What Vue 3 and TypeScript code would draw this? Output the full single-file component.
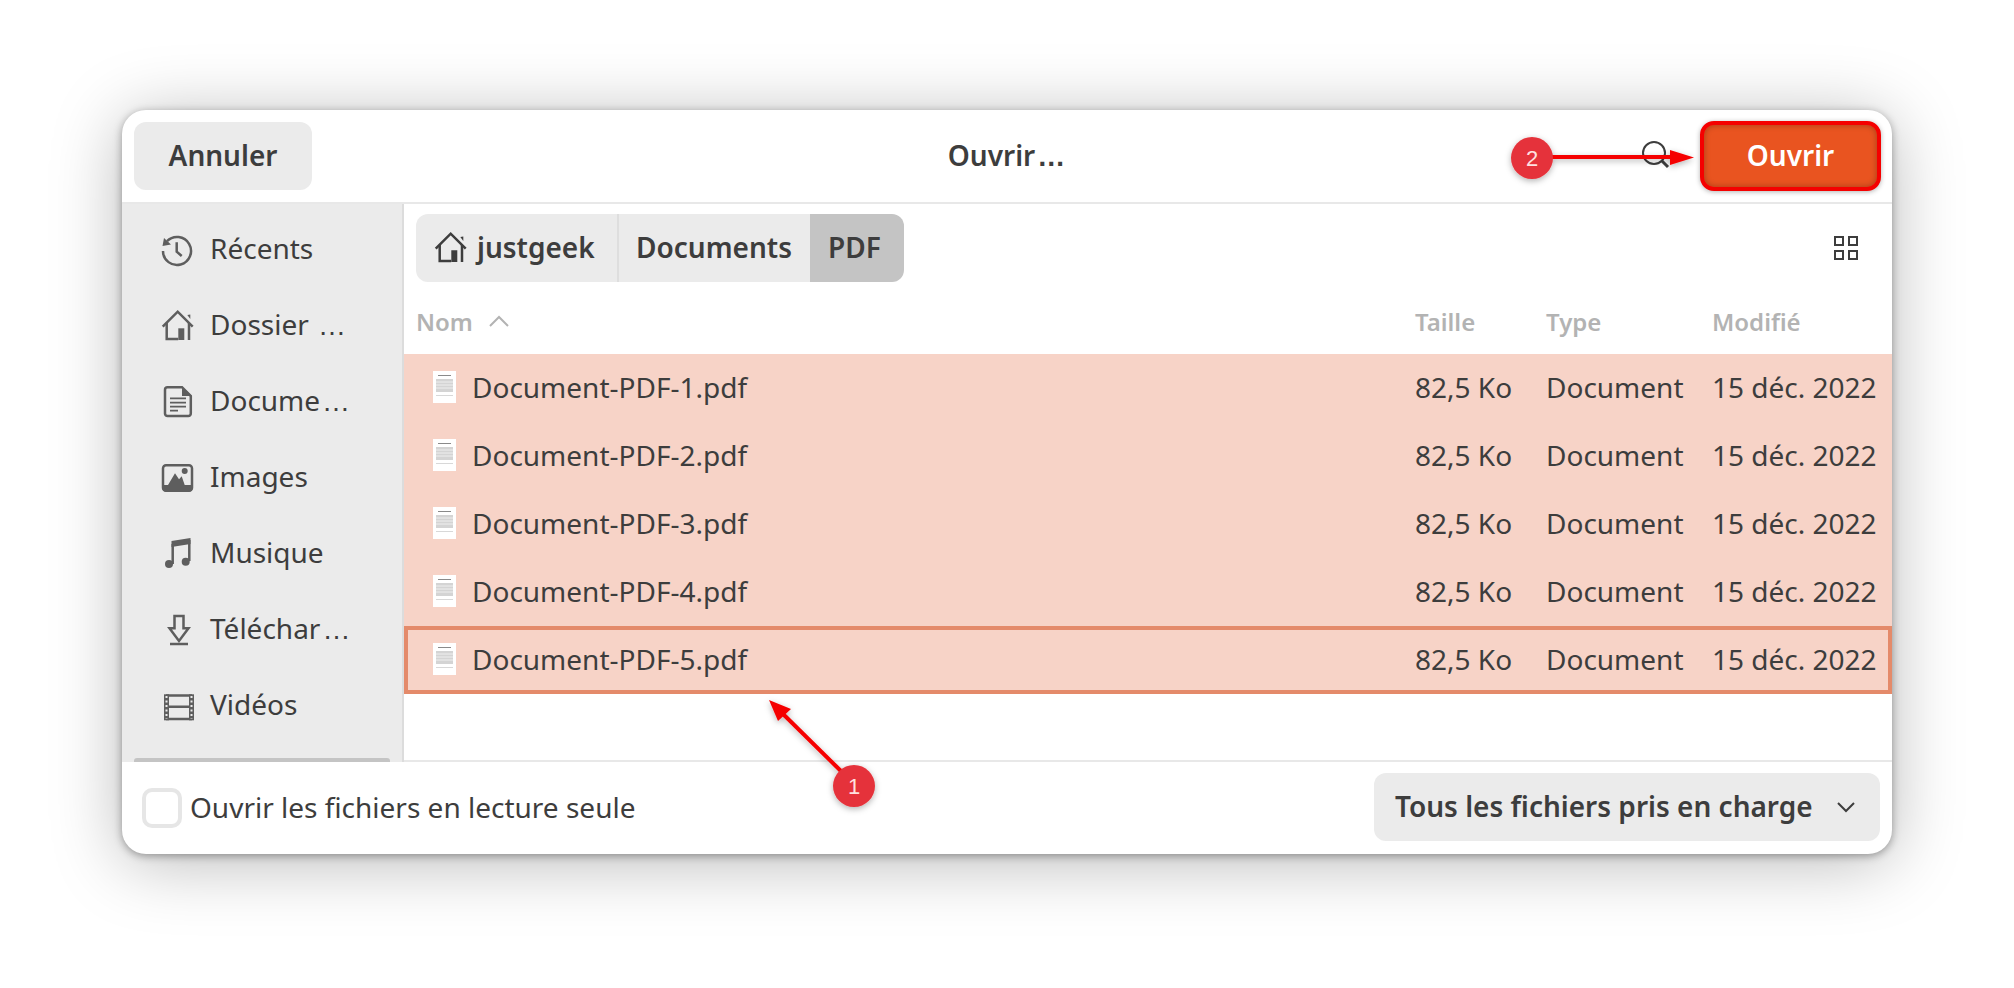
<script setup lang="ts">
const places = [
  { label: 'Récents', dots: false, icon: 'recent' },
  { label: 'Dossier ', dots: true, icon: 'home' },
  { label: 'Docume', dots: true, icon: 'doc' },
  { label: 'Images', dots: false, icon: 'image' },
  { label: 'Musique', dots: false, icon: 'music' },
  { label: 'Téléchar', dots: true, icon: 'download' },
  { label: 'Vidéos', dots: false, icon: 'film' },
]
const files = [1, 2, 3, 4, 5].map((n) => ({
  id: n,
  name: `Document-PDF-${n}.pdf`,
  size: '82,5 Ko',
  type: 'Document',
  date: '15 déc. 2022',
}))
</script>

<template>
  <div class="page">
    <div class="dialog">
      <header class="head">
        <button class="btn cancel">Annuler</button>
        <div class="title">Ouvrir<span class="dots">…</span></div>
        <svg class="search" width="30" height="30" viewBox="0 0 30 30" fill="none" stroke="#3d3d3d">
          <circle cx="13" cy="12" r="11" stroke-width="2" />
          <path d="M21 20l6 6" stroke-width="3" />
        </svg>
        <button class="btn open">Ouvrir</button>
      </header>

      <div class="body">
        <aside class="side">
          <div v-for="p in places" :key="p.icon" class="place">
            <svg class="place-icon" width="32" height="32" viewBox="0 0 32 32" fill="none" stroke="#5e5e5e" stroke-width="2.500">
              <template v-if="p.icon === 'recent'">
                <path d="M6 8.200A14 14 0 1 1 2 18" />
                <path d="M1.500 13L3 5l7 6.500z" fill="#5e5e5e" stroke="none" />
                <path d="M15.700 9.300v9.400l5 4.300" />
              </template>
              <template v-else-if="p.icon === 'home'">
                <path d="M1.700 17.700L16.700 2.700l15 15" />
                <path d="M5.700 14v16h11.500M28 14v17" />
                <path d="M17.300 19.300h6V31h-6z" fill="#5e5e5e" stroke="none" />
                <path d="M26.300 6l3-0.500V10z" fill="#5e5e5e" stroke="none" />
              </template>
              <template v-else-if="p.icon === 'doc'">
                <path d="M6.500 2.200H21L29.800 11v17.500a2.500 2.500 0 0 1-2.500 2.500H6.500A2.500 2.500 0 0 1 4 28.500V4.700a2.500 2.500 0 0 1 2.500-2.500z" />
                <path d="M21 1.500L30.500 11H21z" fill="#5e5e5e" stroke="none" />
                <path d="M9 13.300h16M9 17.700h16M9 21.700h16M9 25.700h8" stroke-width="1.800" />
              </template>
              <template v-else-if="p.icon === 'image'">
                <rect x="2" y="4.200" width="29" height="25.500" rx="3" />
                <path d="M2 24h29v4a2.500 2.500 0 0 1-2.500 2.500h-24A2.500 2.500 0 0 1 2 28z" fill="#5e5e5e" stroke="none" />
                <path d="M7 24L14 12.300l4 6 2.700-3 3 8.700z" fill="#5e5e5e" stroke="none" />
                <circle cx="23.700" cy="10" r="3" fill="#5e5e5e" stroke="none" />
              </template>
              <template v-else-if="p.icon === 'music'">
                <path d="M11.700 27V7M28.300 24V3" />
                <path d="M10.500 4L29.500 1v6l-19 3z" fill="#5e5e5e" stroke="none" />
                <circle cx="8" cy="27" r="4" fill="#5e5e5e" stroke="none" />
                <circle cx="24.700" cy="24.700" r="4" fill="#5e5e5e" stroke="none" />
              </template>
              <template v-else-if="p.icon === 'download'">
                <path d="M13.500 3h9v12.300h5L18 28 8.500 15.300h5z" />
                <path d="M9 31h18" />
              </template>
              <template v-else>
                <path d="M5 6.500h26M5 17.700h26M5 30h26" />
                <rect x="3" y="5.300" width="5" height="26" fill="#5e5e5e" stroke="none" />
                <rect x="28" y="5.300" width="5" height="26" fill="#5e5e5e" stroke="none" />
                <path d="M5.500 7v23M30.500 7v23" stroke="#ebebeb" stroke-width="2" stroke-dasharray="2 2.500" />
              </template>
            </svg>
            <span class="place-label">{{ p.label }}<span v-if="p.dots" class="dots">…</span></span>
          </div>
          <div class="side-scroll"></div>
        </aside>

        <main class="main">
          <div class="pathrow">
            <div class="path">
              <div class="seg seg-home">
                <svg width="34" height="32" viewBox="0 0 34 32" fill="none" stroke="#3d3d3d" stroke-width="2.500">
                  <path d="M1.700 17.700L16.700 2.700l15 15" />
                  <path d="M5.700 14v16h11.500M28 14v17" />
                  <path d="M17.300 19.300h6V31h-6z" fill="#3d3d3d" stroke="none" />
                  <path d="M26.300 6l3-0.500V10z" fill="#3d3d3d" stroke="none" />
                </svg>
                <span>justgeek</span>
              </div>
              <div class="seg seg-docs">Documents</div>
              <div class="seg seg-pdf">PDF</div>
            </div>
            <svg class="grid-icon" width="24" height="24" viewBox="0 0 24 24" fill="none" stroke="#3d3d3d" stroke-width="2">
              <rect x="1" y="1" width="8" height="8" />
              <rect x="15" y="1" width="8" height="8" />
              <rect x="1" y="15" width="8" height="8" />
              <rect x="15" y="15" width="8" height="8" />
            </svg>
          </div>

          <div class="cols">
            <div class="col-name">
              <span>Nom</span>
              <svg width="20" height="12" viewBox="0 0 20 12" fill="none" stroke="#b3b3b3" stroke-width="2"><path d="M1 11l9-9 9 9" /></svg>
            </div>
            <div>Taille</div>
            <div>Type</div>
            <div>Modifié</div>
          </div>

          <div class="list">
            <div v-for="f in files" :key="f.id" class="row" :class="{ focus: f.id === 5 }">
              <div class="cell-name">
                <svg class="file-icon" width="23" height="32" viewBox="0 0 23 32">
                  <rect width="23" height="32" fill="#fff" />
                  <rect x="5" y="4" width="13" height="1" fill="#8a8a8a" />
                  <rect x="3" y="8" width="17" height="13" fill="#d4d4d4" />
                  <path d="M3 11h17M3 14h17M3 17h17" stroke="#efefef" stroke-width="1" />
                  <rect x="3" y="24" width="17" height="1" fill="#d8d8d8" />
                </svg>
                <span>{{ f.name }}</span>
              </div>
              <div>{{ f.size }}</div>
              <div>{{ f.type }}</div>
              <div>{{ f.date }}</div>
            </div>
          </div>
        </main>
      </div>

      <footer class="foot">
        <label class="check">
          <span class="box"></span>
          <span class="lift">Ouvrir les fichiers en lecture seule</span>
        </label>
        <button class="btn filter">
          <span class="lift">Tous les fichiers pris en charge</span>
          <svg width="20" height="12" viewBox="0 0 20 12" fill="none" stroke="#3d3d3d" stroke-width="2"><path d="M2 2l8 8 8-8" /></svg>
        </button>
      </footer>
    </div>

    <svg class="marks" width="2014" height="988" viewBox="0 0 2014 988">
      <defs>
        <filter id="sh" x="-30%" y="-30%" width="160%" height="160%">
          <feDropShadow dx="0" dy="2" stdDeviation="3" flood-color="#000" flood-opacity="0.3" />
        </filter>
      </defs>
      <g filter="url(#sh)">
        <path d="M1550 157H1672" stroke="#f50000" stroke-width="4" fill="none" />
        <path d="M1670 150L1694 157.500L1670 165z" fill="#f50000" />
        <circle cx="1532" cy="158" r="21" fill="#e5323a" />
      </g>
      <g filter="url(#sh)">
        <path d="M846 776L781 712" stroke="#f50000" stroke-width="4" fill="none" />
        <path d="M769 700L791 709L778 721z" fill="#f50000" />
        <circle cx="854" cy="786" r="21" fill="#e5323a" />
      </g>
      <text x="1532" y="166" class="num">2</text>
      <text x="854" y="794" class="num">1</text>
    </svg>
  </div>
</template>

<style>
html, body { margin: 0; background: #fff; }
</style>

<style scoped>
.page {
  position: relative;
  width: 2014px;
  height: 988px;
  box-sizing: border-box;
  padding: 110px 122px 134px;
  background: #fff;
  overflow: hidden;
  font-family: "Noto Sans", "Open Sans", sans-serif;
  font-size: 28px;
  color: #3d3d3d;
}
.dots { font-family: "Liberation Sans", sans-serif; letter-spacing: 1px; margin-left: 2px; }
.dialog {
  height: 744px;
  display: flex;
  flex-direction: column;
  background: #fff;
  border-radius: 24px;
  overflow: hidden;
  box-shadow: 0 2px 8px rgba(0, 0, 0, 0.35), 0 8px 70px rgba(0, 0, 0, 0.28);
}
.btn {
  border: 0;
  font: inherit;
  font-weight: 600;
  color: #3d3d3d;
  border-radius: 12px;
  background: #ebebeb;
  padding: 0;
}
.head {
  height: 94px;
  flex: none;
  display: flex;
  align-items: center;
  padding: 0 11px 0 12px;
  box-sizing: border-box;
  position: relative;
  border-bottom: 2px solid #e8e8e8;
}
.cancel { width: 178px; height: 68px; padding-bottom: 2px; }
.title {
  position: absolute;
  left: 0;
  right: 0;
  text-align: center;
  font-weight: 600;
  pointer-events: none;
  padding-bottom: 2px;
}
.search { margin-left: auto; margin-right: 29px; }
.open {
  width: 181px;
  height: 70px;
  box-sizing: border-box;
  background: #e95420;
  color: #fff;
  border: 4px solid #f50000;
  border-radius: 14px;
  padding-bottom: 2px;
  box-shadow: 0 1px 5px rgba(0, 0, 0, 0.3), inset 0 0 6px rgba(0, 0, 0, 0.3);
}
.body { flex: 1; display: flex; min-height: 0; }
.side {
  width: 282px;
  flex: none;
  box-sizing: border-box;
  background: #ebebeb;
  border-right: 2px solid #dcdcdc;
  padding-top: 7px;
  position: relative;
  overflow: hidden;
}
.place {
  height: 76px;
  display: flex;
  align-items: center;
  padding-left: 39px;
  gap: 17px;
}
.place-icon { flex: none; overflow: visible; }
.place-label { padding-bottom: 2px; white-space: pre; }
.side-scroll {
  position: absolute;
  left: 12px;
  right: 12px;
  bottom: 0;
  height: 4px;
  background: #c4c4c4;
  border-radius: 3px 3px 0 0;
}
.main {
  flex: 1;
  min-width: 0;
  display: flex;
  flex-direction: column;
  border-bottom: 2px solid #e8e8e8;
}
.pathrow {
  height: 78px;
  flex: none;
  display: flex;
  align-items: center;
  justify-content: space-between;
  padding: 10px 34px 0 12px;
  box-sizing: border-box;
}
.path { display: flex; height: 68px; font-weight: 600; }
.seg {
  display: flex;
  align-items: center;
  background: #ebebeb;
  box-sizing: border-box;
  padding-bottom: 2px;
}
.seg-home {
  width: 203px;
  padding-left: 18px;
  gap: 9px;
  border-radius: 12px 0 0 12px;
  border-right: 2px solid #dedede;
}
.seg-docs {
  width: 191px;
  padding-left: 17px;
}
.seg-pdf {
  width: 94px;
  padding-left: 18px;
  background: #c4c4c4;
  border-radius: 0 12px 12px 0;
}
.cols, .row {
  display: grid;
  grid-template-columns: 1011px 131px 166px 1fr;
  align-items: center;
}
.cols {
  height: 72px;
  flex: none;
  font-size: 24px;
  font-weight: 600;
  color: #b3b3b3;
  padding-top: 6px;
  box-sizing: border-box;
}
.col-name {
  display: flex;
  align-items: center;
  gap: 16px;
  padding-left: 12px;
}
.list { flex: 1; }
.row {
  height: 68px;
  background: #f7d3c7;
  box-sizing: border-box;
  padding-bottom: 2px;
}
.row.focus { outline: 4px solid #e48a6a; outline-offset: -4px; }
.cell-name {
  display: flex;
  align-items: center;
  gap: 16px;
  padding-left: 29px;
}
.file-icon { flex: none; }
.foot {
  height: 92px;
  flex: none;
  box-sizing: border-box;
  display: flex;
  align-items: center;
  justify-content: space-between;
  padding: 0 12px 0 20px;
}
.check { display: flex; align-items: center; gap: 8px; }
.lift { padding-bottom: 3px; }
.box {
  width: 40px;
  height: 40px;
  box-sizing: border-box;
  border: 4px solid #e6e6e6;
  border-radius: 10px;
  background: #fff;
}
.filter {
  width: 506px;
  height: 68px;
  margin-bottom: 2px;
  display: flex;
  align-items: center;
  justify-content: space-between;
  padding: 0 24px 0 21px;
  box-sizing: border-box;
}
.marks {
  position: absolute;
  left: 0;
  top: 0;
  pointer-events: none;
}
.num {
  fill: #ffe0e0;
  font-size: 22px;
  text-anchor: middle;
  font-family: "Liberation Sans", sans-serif;
}
</style>
